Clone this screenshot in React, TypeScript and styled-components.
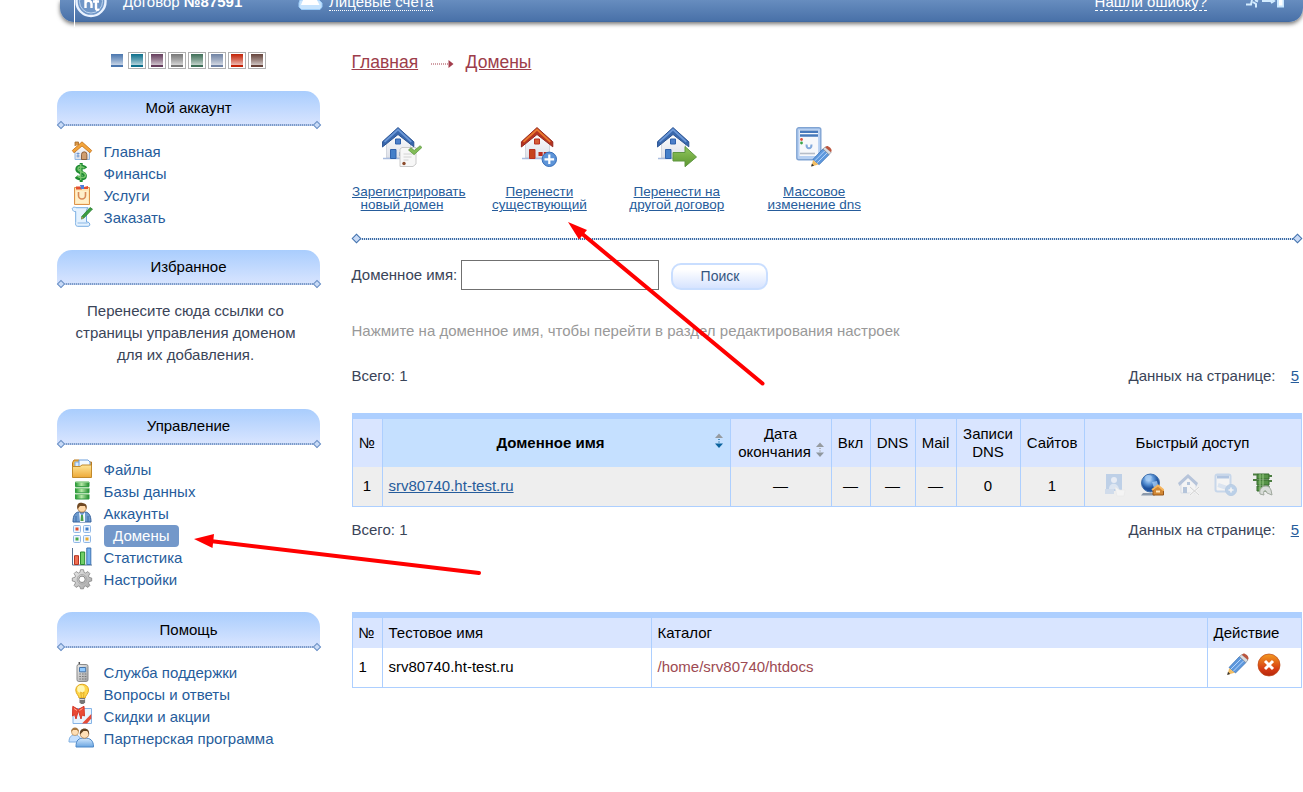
import React from "react";
import styled, { createGlobalStyle, css } from "styled-components";

const GlobalStyle = createGlobalStyle`
  * { box-sizing: border-box; }
  html, body { margin: 0; height: 792px; overflow: hidden; background: #fff; }
  body { font-family: "Liberation Sans", Arial, sans-serif; font-size: 15px; color: #3a4458; }
  a { color: #265c9b; }
`;

const Page = styled.div`
  position: relative;
  width: 1303px;
  height: 792px;
  overflow: hidden;
  display: flex;
  flex-direction: column;
`;

const Header = styled.header`
  flex: none;
  margin-left: 60px;
  width: 1243px;
  height: 22px;
  display: flex;
  color: #fff;
  background: linear-gradient(#678dbf, #4a72a9 92%, #3f679e);
  border-radius: 0 0 14px 14px;
  box-shadow: 0 2px 4px rgba(0, 0, 0, 0.55);
`;
const LogoBox = styled.div`
  width: 34px;
  height: 27px;
  margin-left: 14px;
  border-left: 1px solid #fff;
  svg { display: block; }
`;
const HeaderText = styled.div`
  height: 18px;
  width: 176px;
  padding-left: 15px;
  margin-top: -7px;
  line-height: 18px;
  white-space: nowrap;
`;
const HeaderLink = styled.span<{ $dashed?: boolean }>`
  height: 18px;
  margin-top: -7px;
  line-height: 18px;
  border-bottom: 1px ${(p) => (p.$dashed ? "dashed" : "dotted")} #fff;
  white-space: nowrap;
`;
const Spacer = styled.div`
  flex: 1;
`;
const ExitSlot = styled.div`
  width: 57px;
  margin: 0 0 0 39px;
  svg { display: block; }
`;

const Body = styled.div`
  display: flex;
  padding-left: 57px;
`;
const Sidebar = styled.aside`
  width: 263px;
  padding-top: 30px;
`;
const Main = styled.main`
  width: 951px;
  margin-left: 31px;
  padding-left: 1px;
`;

const Swatches = styled.div`
  display: flex;
  gap: 2px;
  height: 39px;
  padding-left: 51px;
`;
const Swatch = styled.div<{ $c: string; $active?: boolean }>`
  width: 18px;
  height: 17px;
  padding: 1px 2px;
  border: 1px solid ${(p) => (p.$active ? "#fff" : "#b0b0b0")};
  &::before {
    content: "";
    display: block;
    width: 12px;
    height: 13px;
    background: linear-gradient(${(p) => p.$c}, ${(p) => p.$c}aa 45%, ${(p) => p.$c}55 82%, ${(p) => p.$c} 84%);
  }
`;

const PanelTitle = styled.h2<{ $low?: boolean }>`
  margin: 0;
  height: 35px;
  font-size: 15px;
  font-weight: normal;
  line-height: ${(p) => (p.$low ? 35 : 33)}px;
  text-align: center;
  color: #000;
  background: linear-gradient(#a9cdfd, #d9e5ff);
  border-radius: 15px 15px 0 0;
`;
const Rule = styled.div<{ $main?: boolean; $lift?: boolean }>`
  display: flex;
  align-items: center;
  justify-content: space-between;
  height: 7px;
  margin-top: ${(p) => (p.$lift ? -5 : -4)}px;
  margin-bottom: ${(p) => (p.$lift ? 1 : 0)}px;
  padding: 0 ${(p) => (p.$main ? 1 : 0.5)}px;
  &::before, &::after {
    content: "";
    width: ${(p) => (p.$main ? 5 : 4)}px;
    height: ${(p) => (p.$main ? 5 : 4)}px;
    border: ${(p) => (p.$main ? "1.5px solid #4675ad" : "1px solid #6b90c4")};
    background: #c9dbf7;
    transform: rotate(45deg);
  }
`;
const RuleLine = styled.div<{ $main?: boolean }>`
  flex: 1;
  height: 2px;
  background: ${(p) =>
    p.$main
      ? "repeating-linear-gradient(90deg, #3d6ba5 0 1px, #d5e2f0 1px 2px)"
      : "repeating-linear-gradient(90deg, #7c9bca 0 1px, #b7caeb 1px 2px)"};
`;
const Menu = styled.nav<{ $gap: number }>`
  padding: 12px 0 0 15px;
  margin-bottom: ${(p) => p.$gap}px;
`;
const MenuItem = styled.div`
  display: flex;
  height: 22px;
  line-height: 22px;
  color: #265c9b;
  white-space: nowrap;
`;
const MenuIcon = styled.span`
  width: 31.6px;
  height: 22px;
  svg { display: block; overflow: visible; }
`;
const Label = styled.span<{ $active?: boolean }>`
  ${(p) =>
    p.$active &&
    css`
      color: #fff;
      background: #7398ca;
      border-radius: 4px;
      padding: 0 9.5px;
    `}
`;
const Hint = styled.p`
  margin: 13px 0 43px;
  height: 66px;
  line-height: 22px;
  padding: 0 10px 0 4px;
  text-align: center;
`;

const Crumbs = styled.div`
  display: flex;
  margin: 29px 0 0 -0.5px;
  height: 22px;
  line-height: 22px;
  font-size: 17.5px;
  a { color: #9d3d4a; }
  svg { margin: 8px 11.5px 0 12px; }
`;
const Actions = styled.div`
  display: flex;
  gap: 37.4px;
  height: 127px;
  padding-top: 54px;
`;
const Action = styled.div`
  width: 100px;
  text-align: center;
  font-size: 13.5px;
  line-height: 13px;
  svg { display: block; margin: 0 auto 18px; }
`;
const RuleBox = styled.div`
  padding-top: 39px;
`;
const SearchRow = styled.form`
  display: flex;
  height: 30px;
  margin: 18px 0 0 -0.5px;
  line-height: 30px;
`;
const SearchLabel = styled.label`
  width: 109.5px;
`;
const Field = styled.input`
  width: 198px;
  height: 30px;
  margin: 0 12px 0 0;
  border: 1px solid #707070;
  background: #fff;
`;
const Button = styled.button`
  width: 97px;
  height: 27px;
  margin-top: 3px;
  padding: 0 0 1px 1px;
  border: 2px solid #c9deff;
  border-radius: 10px;
  background: linear-gradient(#fff 20%, #d6e3ff);
  color: #345580;
  font: 14px "Liberation Sans", Arial, sans-serif;
`;
const Note = styled.p`
  margin: 30px 0 0 -0.5px;
  height: 22px;
  line-height: 22px;
  color: #999;
`;
const Totals = styled.div<{ $top: number; $bottom: number }>`
  display: flex;
  justify-content: space-between;
  margin: ${(p) => p.$top}px 3px ${(p) => p.$bottom}px -0.5px;
  height: 22px;
  line-height: 22px;
  a { margin-left: 11px; }
`;
const Grid = styled.div<{ $cols: string; $head: number }>`
  display: grid;
  grid-template-columns: ${(p) => p.$cols};
  grid-template-rows: ${(p) => p.$head}px 40px;
  width: 950px;
  border-top: 6px solid #adcfff;
  border-left: 1px solid #adcfff;
  color: #000;
`;
const Cell = styled.div<{ $bg?: string; $left?: boolean; $last?: boolean; $color?: string; $bold?: boolean }>`
  display: flex;
  align-items: center;
  justify-content: ${(p) => (p.$left ? "flex-start" : "center")};
  text-align: center;
  line-height: 18px;
  padding-left: ${(p) => (p.$left ? "5.5px" : "0")};
  padding-right: ${(p) => (p.$left ? "0" : "1px")};
  padding-bottom: ${(p) => (p.$last ? "2px" : "0")};
  border-right: 1px solid #adcfff;
  border-bottom: ${(p) => (p.$last ? "1px solid #adcfff" : "0")};
  background: ${(p) => p.$bg ?? "#fff"};
  color: ${(p) => p.$color ?? "inherit"};
  font-weight: ${(p) => (p.$bold ? "bold" : "normal")};
`;
const SortTitle = styled.span`
  flex: 1;
  padding-left: 4px;
`;
const DateTitle = styled.span`
  display: flex;
  flex-direction: column;
  align-items: center;
`;
const DateLine = styled.span`
  display: flex;
  height: 18px;
  margin-left: 2px;
`;
const SortSlot = styled.span<{ $low?: boolean }>`
  width: 10px;
  height: 16px;
  margin: ${(p) => (p.$low ? "-1px 0 0 4px" : "0 5px 4px 0")};
  svg { display: block; }
`;
const Quick = styled.div`
  display: flex;
  gap: 13px;
  padding: 0 8px 2px 0;
`;
const Tools = styled.div`
  display: flex;
  gap: 7px;
  padding: 0 1px 3px 0;
  svg { display: block; }
`;
const Arrows = styled.svg`
  position: absolute;
  left: 0;
  top: 0;
  pointer-events: none;
`;
const HiddenDefs = styled.svg`
  position: absolute;
`;

const Defs = () => (
  <HiddenDefs width="0" height="0">
    <defs>
      <linearGradient id="gold" x2="0" y2="1"><stop stopColor="#ffe596" /><stop offset="1" stopColor="#eda937" /></linearGradient>
      <linearGradient id="green" x2="1"><stop stopColor="#259a30" /><stop offset=".45" stopColor="#b4e8a6" /><stop offset="1" stopColor="#218b2c" /></linearGradient>
      <linearGradient id="leaf" x2="0" y2="1"><stop stopColor="#92c75d" /><stop offset="1" stopColor="#5c9630" /></linearGradient>
      <linearGradient id="sky" x2="0" y2="1"><stop stopColor="#d6ebff" /><stop offset="1" stopColor="#69a4e0" /></linearGradient>
      <linearGradient id="wall" x2="0" y2="1"><stop stopColor="#fff" /><stop offset="1" stopColor="#dde0e8" /></linearGradient>
      <linearGradient id="steel" x2="1" y2="1"><stop stopColor="#ededed" /><stop offset="1" stopColor="#a2a2a2" /></linearGradient>
      <linearGradient id="rust" x2="0" y2="1"><stop stopColor="#f39a21" /><stop offset=".7" stopColor="#d43a12" /><stop offset="1" stopColor="#b5270d" /></linearGradient>
      <radialGradient id="globe" cx=".4" cy=".3"><stop stopColor="#c4e1ff" /><stop offset=".6" stopColor="#558fd2" /><stop offset="1" stopColor="#1f529d" /></radialGradient>
    </defs>
  </HiddenDefs>
);

const glyphs: Record<string, React.ReactNode> = {
  home: (
    <>
      <path d="M3 9v9.5h14.500V9L10 3z" fill="url(#wall)" stroke="#90b8e5" />
      <path d="M3 5V1h3.500v3" fill="#d99542" stroke="#a56a28" strokeWidth=".8" />
      <path d="M.3 9.500 10 .8l9.700 8.700-1.700 2.300L10 5l-8 6.800z" fill="#f2a43b" stroke="#c36f16" strokeWidth=".8" />
      <path d="M9.5 18.5v-5a2.7 2.7 0 0 1 5.4 0v5z" fill="#cf9e70" stroke="#7c4c27" strokeWidth=".8" />
      <path d="M4.5 12.5h3M4.5 15h3M6 11.5v5" stroke="#7097cf" />
    </>
  ),
  money: (
    <>
      <path d="M13.500 5.500C12 3 5.200 2.800 5.200 6.300c0 4 7.800 2.400 7.800 6.400 0 3.800-6.700 3.400-8.700.8" fill="none" stroke="#1f8b32" strokeWidth="3.800" />
      <path d="M9.200 0v19" stroke="#1f8b32" strokeWidth="3" />
      <path d="M12.500 5.200c-2-2-6.500-2-6.500.8 0 3.500 7.500 2.200 7.500 6.200 0 3.300-6 3-8 .8M8.700 1v16" fill="none" stroke="#79c76d" strokeWidth="1.400" />
    </>
  ),
  bag: (
    <>
      <path d="M2.5 2.5h15v17h-15z" fill="#ffe6b5" stroke="#dc934a" />
      <path d="M4 1.5h4l2 3H4z" fill="#e44e2e" /><path d="M8 0h4v4H9z" fill="#4e7fdc" /><path d="m12 2 4-1v3h-4z" fill="#e44e2e" />
      <path d="M4 6h12v12H4z" fill="#fff0ca" />
      <path d="M6.5 7v3.5a3.5 3.5 0 0 0 7 0V7" fill="none" stroke="#d98b58" strokeWidth="1.6" />
    </>
  ),
  order: (
    <>
      <path d="M.5 2.500C-.500.500 2.500-.500 4 .7h12c-2 1.500-1.500 4-1.500 6V15c3-.8 5 4 1.500 4.300H5.700c-3 0-2-4.300-2-4.300V4.500C2 4.800 1 4 .5 2.500Z" fill="#e4f2ff" stroke="#78ade2" />
      <path d="M5.5 16h10" stroke="#8bb7e4" />
      <path d="m18 .5 2.500 1.600-8.700 9-2.300 1 .3-2.700z" fill="#3a9e42" stroke="#217428" strokeWidth=".7" />
      <path d="m9.5 12 .2-2.2 1.9 1.3z" fill="#d99b63" />
    </>
  ),
  folder: (
    <>
      <path d="M.5 3.5 2 1h5l1 2h11.500v7H.5z" fill="#f2b643" stroke="#b9781d" />
      <path d="M3 3h6v10H3z" fill="#d8ebff" stroke="#7fabe0" /><path d="M7 1h9l2 2v10H7z" fill="#f2f9ff" stroke="#6d9edb" />
      <path d="M.5 7.5H8l2-1.5h9.5v12.500H.5z" fill="url(#gold)" stroke="#c28a2b" />
    </>
  ),
  db: (
    <>
      {[0, 6.2, 12.4].map((y) => (
        <path key={y} d={`M3.500 ${y + 1}h13.500V${y + 5.6}h-13.500z`} fill="url(#green)" stroke="#2f9a40" />
      ))}
      <path d="M3.500 1h13.500M3.500 7h13.500M3.500 13h13.500" stroke="#bfe8b5" />
    </>
  ),
  user: (
    <>
      <path d="M1 19c0-7 2.5-10 6-10h6c3.5 0 6 3 6 10z" fill="#6e9bce" stroke="#35619c" />
      <path d="m7 9 3 4 3-4v10H8z" fill="#f3f8ff" /><path d="M9 12h2l.5 6h-3z" fill="#4c9f4a" />
      <path d="M4 13v6M16 13v6" stroke="#3e6ca8" />
      <circle cx="10" cy="5" r="4.2" fill="#ffd8a7" stroke="#99612b" strokeWidth=".7" />
      <path d="M5.5 6C4 .5 8-1 11 .3c4 .5 4 3 3.4 5.8L13 3 8 3z" fill="#704923" />
    </>
  ),
  domains: (
    <>
      {[[1, 0, "#e04e2e"], [11, 0, "#3e7cc6"], [1, 10, "#47a848"], [11, 10, "#e8a92b"]].map(([x, y, c]) => (
        <g key={`${x}${y}`}>
          <rect x={+x + 0.5} y={+y + 0.5} width="7" height="7" rx="1" fill="#edf5ff" stroke="#8fb7e6" />
          <rect x={+x + 2.5} y={+y + 2.5} width="3" height="3" fill={String(c)} />
        </g>
      ))}
    </>
  ),
  stats: (
    <>
      <path d="M.5 1v17H20" fill="none" stroke="#56718f" />
      <path d="M2.5 17.5V8.7h4v8.8z" fill="#ef7053" stroke="#b43322" />
      <path d="M8.5 17.5V5h4.2v12.5z" fill="#71cf67" stroke="#298a30" />
      <path d="M14.8 17.5V1h4v16.5z" fill="#77b2ed" stroke="#3f73b2" />
    </>
  ),
  gear: (
    <>
      <path d="M8.5.7h3l.6 2.7 1.4.6 2.4-1.4 2 2-1.4 2.4.6 1.4 2.6.6v3l-2.6.6-.6 1.4 1.4 2.4-2 2-2.4-1.4-1.4.6-.6 2.2h-3l-.6-2.2-1.4-.6-2.4 1.4-2-2L3.5 14l-.6-1.4L.3 12V9l2.6-.6L3.5 7 2.1 4.6l2-2L6.5 4l1.4-.6z" fill="url(#steel)" stroke="#858585" strokeWidth=".8" />
      <circle cx="10" cy="10.3" r="4.8" fill="none" stroke="#aaa" />
      <circle cx="10" cy="10.3" r="3.2" fill="#fff" stroke="#888" />
    </>
  ),
  phone: (
    <>
      <path d="M7.3 0v4" stroke="#555" strokeWidth="1.5" />
      <rect x="5" y="2.5" width="11" height="17" rx="1.8" fill="url(#steel)" stroke="#8b8b8b" />
      <path d="M7.5 5.5h6.200v4.3H7.5z" fill="#8fc9ff" stroke="#4676ab" />
      <path d="M7.3 12h7M7.3 14.5h7M7.3 17h7" stroke="#777" strokeDasharray="1.6 1.1" />
    </>
  ),
  bulb: (
    <>
      <path d="M7 14c0-2.500-3.200-4-3.200-8C3.800-1.700 16.500-1.700 16.500 6c0 4-3.300 5.500-3.300 8z" fill="#ffd84d" stroke="#dfa51c" />
      <circle cx="9" cy="5" r="3.8" fill="#fff7b3" /><path d="m9.500 14-.8-6 1.500 1.400L12 8l-.5 6" fill="none" stroke="#e5ae27" />
      <path d="M7.5 14h5.6v4.2L11.5 20H9l-1.500-1.800z" fill="#777" /><path d="M7.5 15.5h5" stroke="#ddd" />
    </>
  ),
  gift: (
    <>
      <path d="M1 2.500h18.500v15H1z" fill="#e8f4ff" stroke="#86b4e6" />
      <path d="M10 17.500 19.300 8v4.500L15 17.500z" fill="#e54b37" />
      <path d="M6.3 3.500.8.3.5 10l2-1.500L4 13l2.300-8.300L9 13l1-4 2.500 1-.5-9.700z" fill="#ea4934" stroke="#d63a2b" />
      <path d="m2 2.500 3 2M10.500 2.500l-3 2" stroke="#ffa793" />
    </>
  ),
  partners: (
    <>
      <path d="M-3 14c0-5 2-7 6-7s6 3 6 7z" fill="#c5e0ff" stroke="#7eafe1" />
      <circle cx="3" cy="4" r="3.5" fill="#ffdfb5" stroke="#ad7a42" strokeWidth=".6" /><path d="M-1 4C-1-2 7-2 7 4L5 2H1z" fill="#a77841" />
      <path d="M4 19c0-7 2.5-9 8.5-9s9 2.5 9 9z" fill="url(#sky)" stroke="#4c88c8" />
      <circle cx="12.5" cy="6" r="4.3" fill="#ffe0b6" stroke="#986535" strokeWidth=".7" />
      <path d="M8 6.5C6.5-1.5 18.5-1.5 17 6.5L15.5 3h-4z" fill="#614322" />
    </>
  ),
};

const Glyph = ({ name }: { name: string }) => (
  <svg width="20" height="20" viewBox="0 0 20 20">{glyphs[name]}</svg>
);

const House = ({ red }: { red?: boolean }) => {
  const c = red ? "#b92f20" : "#2f62ac";
  return (
    <>
      <path d="M4.5 17 16 5.5 28.5 17v14H4.5z" fill="url(#wall)" stroke="#c3c8d4" strokeWidth=".7" />
      <path d="M1 31.5h28" stroke="#a9bcdf" strokeWidth="1.5" />
      <path d="M8.5 22.5h5.5v9H8.5z" fill={red ? "#c6431b" : "#447fc9"} stroke={c} />
      <path d="M17.5 25h4.2v4h-4.2zM22.8 25h4v4h-4z" fill={c} />
      <path d="M13.5 12h5v5h-5z" fill={red ? "#d35d35" : "#4c7fc9"} stroke={c} />
      <path d="M.4 14.8 16 .6l15.8 14.2v5L16 7.500.4 20z" fill={red ? "#b53420" : "#3867ac"} stroke={red ? "#942920" : "#2b5392"} strokeWidth="1" strokeLinejoin="round" />
      <path d="m2.500 14.800 13.500-12.300 13.300 12.300" fill="none" stroke={red ? "#e97a2e" : "#6b97d6"} strokeWidth="1.800" />
    </>
  );
};

const Pencil = () => (
  <>
    <path d="m3 14.500 10.500-11 6.500 6L9.500 20z" fill="#5e98dc" stroke="#326bb2" strokeWidth=".7" />
    <path d="m5 16 10.500-10.500M7.500 18l10.500-10.500" stroke="#b7d7ff" strokeWidth="1" />
    <path d="m1.500 21.800 1.700-6.600 5.500 4.600z" fill="#f3bd62" /><path d="m1.200 22 .8-3.200 2.200 2.200z" fill="#333" />
    <path d="m13.500 3.500 2.500-2 6 5.500-2.200 2.500z" fill="#d9dde1" stroke="#868b93" strokeWidth=".7" />
    <path d="m15.700 1.700 1.800-1.200c2.200 0 5 2.500 5 4.900L22 7z" fill="#bb563e" />
  </>
);

const actionArt = [
  <>
    <House />
    <path d="M20 20.5h14V37l-3 2.5H18V22z" fill="#f7f7f7" stroke="#cacaca" /><path d="M21.5 27h9M21.5 30h8M21.5 33h5" stroke="#d2d2d2" />
    <circle cx="22" cy="36.5" r="1.7" fill="#8b4b2c" />
    <path d="m26.5 23 2.5-2.3 3.2 2.8 6-4.8 1.7 1.8-7.8 7.2z" fill="#83bd58" stroke="#55903a" strokeWidth=".7" />
  </>,
  <>
    <g transform="translate(2)"><House red /></g>
    <circle cx="30.3" cy="32.3" r="7.2" fill="#5d94d8" stroke="#376eb8" /><path d="M30.3 27.5v9.6M25.5 32.3h9.6" stroke="#fff" strokeWidth="2.2" />
  </>,
  <>
    <House />
    <path d="M16 25.5h12v-6L39.5 30 28 39.7V34H16z" fill="url(#leaf)" stroke="#5e9641" />
  </>,
  <>
    <rect x="2.8" y=".8" width="24" height="32" rx="2" fill="#b7d0f2" stroke="#80a4d3" strokeWidth="1.4" />
    <path d="M5.5 3h18.6v26H5.5z" fill="#f7f8fb" /><path d="M6 4.800h18M6 8.500h18" stroke="#4779bb" strokeWidth="2.400" />
    <path d="M6 26.5h15" stroke="#b6bdc8" strokeWidth="1.6" /><circle cx="7.5" cy="12.5" r="1.4" fill="#dc4e39" /><circle cx="7.5" cy="16" r="1.4" fill="#3ba348" />
    <path d="M12.500 17.500c0 5 5 5 5 0" fill="none" stroke="#83a9dc" strokeWidth="2" />
    <g transform="translate(16 18.5) scale(.96)"><Pencil /></g>
  </>,
];

const quickArt = [
  <g opacity=".38">
    <path d="M3 1h16v17H3z" fill="#72a2de" /><circle cx="11" cy="7" r="3" fill="#dfeaff" /><path d="M6 16c0-7 9-7 10 0z" fill="#c1d8f6" />
    <path d="M2 16h9v5H2z" fill="#a3c1e8" /><path d="m12 14 5 3 5 0-1 6h-7z" fill="#fff" stroke="#ddd" strokeWidth=".6" />
  </g>,
  <>
    <circle cx="10.5" cy="10" r="9" fill="url(#globe)" stroke="#3e6fad" /><path d="M5 4c2-3 6-2 7 0l-2 3-4 1zM12 9l5-1 1 4-4 3z" fill="#a3c9f3" opacity=".8" />
    <path d="M3 20h12v2.5H1z" fill="#8b99aa" /><path d="M13 21v-4l5-4 5.5 4v5H13z" fill="#d28835" stroke="#985719" />
    <path d="m12 17 6-4.5 6 5" fill="none" stroke="#f7b65e" strokeWidth="2" /><path d="M16 18.5h4" stroke="#ffe6be" strokeWidth="2" />
  </>,
  <g opacity=".4">
    <path d="M4 10v10h15V9l-8-7z" fill="#fff" stroke="#bcc7db" /><path d="m1 10 10-9 10 9-1.500 3L11 5 2.500 13z" fill="#6386bd" />
    <path d="M6 14h4v6H6zM10 9h3v3h-3z" fill="#5f86bd" /><path d="m13 14 9 8M22 14l-9 8" stroke="#fff" strokeWidth="3" /><path d="m13 14 9 8M22 14l-9 8" stroke="#aaa" />
  </g>,
  <g opacity=".4">
    <rect x="1.500" y="1.500" width="15" height="17" rx="2" fill="#fff" stroke="#8fb5e6" strokeWidth="2" /><path d="M3 4h12" stroke="#5889cf" strokeWidth="3" />
    <path d="m4 12 9 3" stroke="#c0d7f4" strokeWidth="4" /><circle cx="17" cy="17" r="5.500" fill="#71a5e0" stroke="#6a9ad4" /><path d="M14.500 17h5M17 14.500v5" stroke="#fff" strokeWidth="1.600" />
  </g>,
  <>
    <path d="M6 1h12v5H6zM6 7h12v5H6zM6 13h12v5H6z" fill="#569347" stroke="#356a2c" /><path d="M9 1v17M12 1v17" stroke="#9aca87" />
    <path d="M2 1.500h4M2 7h4M18 3h3M18 8h3" stroke="#4c7e41" strokeWidth="2" />
    <path d="M9 21c-1-5 2-8 6-8 3 0 4 2 5 4l1 5-5-2-1-2c-2-1-3 1-2 4z" fill="#d9ddd9" stroke="#a0a89e" />
  </>,
];

const Sort = ({ active }: { active?: boolean }) => (
  <svg width="10" height="16" viewBox="0 0 10 16">
    <path d="M1 5 5 .5 9 5z" fill="#969ba0" />
    <path d="M4 6.5h2M4 9h2" stroke={active ? "#4c91bd" : "#aeb3b8"} />
    <path d="M1 10.5h8L5 15z" fill={active ? "#0b639e" : "#8f979e"} />
  </svg>
);

const Panel = ({ title, lift, low }: { title: string; lift?: boolean; low?: boolean }) => (
  <>
    <PanelTitle $low={low}>{title}</PanelTitle>
    <Rule $lift={lift}><RuleLine /></Rule>
  </>
);

const List = ({ items, gap }: { items: [string, string][]; gap: number }) => (
  <Menu $gap={gap}>
    {items.map(([icon, text]) => (
      <MenuItem key={text}>
        <MenuIcon><Glyph name={icon} /></MenuIcon>
        <Label $active={text === "Домены"}>{text}</Label>
      </MenuItem>
    ))}
  </Menu>
);

const colors = ["#4a76ae", "#0c6f8b", "#653d5c", "#777777", "#3f6f58", "#6f82a3", "#c32206", "#65433b"];
const head = "#d9e5ff";
const row = "#eeeeee";

export default function App() {
  return (
    <>
      <GlobalStyle />
      <Defs />
      <Page>
        <Header>
          <LogoBox>
            <svg width="34" height="22" viewBox="0 0 34 22">
              <circle cx="16" cy="1.500" r="14.500" fill="#7097c8" stroke="#e9f2ff" strokeWidth="2.400" />
              <circle cx="16" cy="1.500" r="11.500" fill="none" stroke="#bdd4ee" />
              <path d="M10.500 0v8M10.500 3c1-3 6-3 6 1v4M21 0v8c0 2 1.500 2.500 3 1M18 1.500h6" fill="none" stroke="#fff" strokeWidth="2.400" />
            </svg>
          </LogoBox>
          <HeaderText>Договор <b>№87591</b></HeaderText>
          <svg width="45" height="12" viewBox="0 0 45 12">
            <path d="M16 0h19l3 3v4l-2 2.500H17.500L15 7V3z" fill="#c6e3fd" stroke="#9cccf8" />
            <path d="M19 0h14l2.500 5H17z" fill="#fff" />
          </svg>
          <HeaderLink>Лицевые счета</HeaderLink>
          <Spacer />
          <HeaderLink $dashed>Нашли ошибку?</HeaderLink>
          <ExitSlot>
            <svg width="42" height="9" viewBox="0 0 42 9">
              <path d="M6 0 5 4.500H0M7 2l3 2v3.500M9 0l3 1.500M16 1h10M25-1l3 2-3 2" fill="none" stroke="#d3ecff" strokeWidth="2" />
              <path d="M31 0h7v7.500h-7z" fill="#c9e7ff" /><path d="M33 0h3.500v5.500H33z" fill="#fff" />
            </svg>
          </ExitSlot>
        </Header>
        <Body>
          <Sidebar>
            <Swatches>{colors.map((c, i) => <Swatch key={c} $c={c} $active={i === 0} />)}</Swatches>
            <Panel title="Мой аккаунт" lift />
            <List gap={21} items={[["home", "Главная"], ["money", "Финансы"], ["bag", "Услуги"], ["order", "Заказать"]]} />
            <Panel title="Избранное" lift />
            <Hint>Перенесите сюда ссылки со<br />страницы управления доменом<br />для их добавления.</Hint>
            <Panel title="Управление" />
            <List gap={21} items={[["folder", "Файлы"], ["db", "Базы данных"], ["user", "Аккаунты"], ["domains", "Домены"], ["stats", "Статистика"], ["gear", "Настройки"]]} />
            <Panel title="Помощь" low />
            <List gap={0} items={[["phone", "Служба поддержки"], ["bulb", "Вопросы и ответы"], ["gift", "Скидки и акции"], ["partners", "Партнерская программа"]]} />
          </Sidebar>
          <Main>
            <Crumbs>
              <a href="#home">Главная</a>
              <svg width="24" height="10" viewBox="0 0 24 10">
                <path d="M1 5h18" stroke="#a33e4d" strokeDasharray="1 1" strokeWidth="1.2" /><path d="m18.5 1 5 4-5 4z" fill="#a33e4d" />
              </svg>
              <a href="#domains">Домены</a>
            </Crumbs>
            <Actions>
              {["Зарегистрировать новый домен", "Перенести существующий", "Перенести на другой договор", "Массовое изменение dns"].map((t, i) => (
                <Action key={t}>
                  <svg width="40" height="40" viewBox="0 0 40 40">{actionArt[i]}</svg>
                  <a href="#action">{t}</a>
                </Action>
              ))}
            </Actions>
            <RuleBox>
              <Rule $main><RuleLine $main /></Rule>
            </RuleBox>
            <SearchRow>
              <SearchLabel>Доменное имя:</SearchLabel>
              <Field />
              <Button type="button">Поиск</Button>
            </SearchRow>
            <Note>Нажмите на доменное имя, чтобы перейти в раздел редактирования настроек</Note>
            <Totals $top={23} $bottom={26}>
              <span>Всего: 1</span>
              <span>Данных на странице: <a href="#n">5</a></span>
            </Totals>
            <Grid $cols="30px 348px 101px 39px 45px 41px 64px 64px 217px" $head={48}>
              <Cell $bg={head}>№</Cell>
              <Cell $bg="#c5e0ff" $bold><SortTitle>Доменное имя</SortTitle><SortSlot><Sort active /></SortSlot></Cell>
              <Cell $bg={head}>
                <DateTitle>
                  <span>Дата</span>
                  <DateLine>окончания<SortSlot $low><Sort /></SortSlot></DateLine>
                </DateTitle>
              </Cell>
              <Cell $bg={head}>Вкл</Cell>
              <Cell $bg={head}>DNS</Cell>
              <Cell $bg={head}>Mail</Cell>
              <Cell $bg={head}>Записи<br />DNS</Cell>
              <Cell $bg={head}>Сайтов</Cell>
              <Cell $bg={head}>Быстрый доступ</Cell>
              <Cell $bg={row} $last>1</Cell>
              <Cell $bg={row} $last $left><a href="#d">srv80740.ht-test.ru</a></Cell>
              <Cell $bg={row} $last>—</Cell>
              <Cell $bg={row} $last>—</Cell>
              <Cell $bg={row} $last>—</Cell>
              <Cell $bg={row} $last>—</Cell>
              <Cell $bg={row} $last>0</Cell>
              <Cell $bg={row} $last>1</Cell>
              <Cell $bg={row} $last>
                <Quick>{quickArt.map((art, i) => <svg key={i} width="24" height="24" viewBox="0 0 24 24">{art}</svg>)}</Quick>
              </Cell>
            </Grid>
            <Totals $top={12} $bottom={71}>
              <span>Всего: 1</span>
              <span>Данных на странице: <a href="#n">5</a></span>
            </Totals>
            <Grid $cols="30px 269px 556px 94px" $head={30}>
              <Cell $bg={head} $left>№</Cell>
              <Cell $bg={head} $left>Тестовое имя</Cell>
              <Cell $bg={head} $left>Каталог</Cell>
              <Cell $bg={head} $left>Действие</Cell>
              <Cell $last $left>1</Cell>
              <Cell $last $left>srv80740.ht-test.ru</Cell>
              <Cell $last $left $color="#9d4a52">/home/srv80740/htdocs</Cell>
              <Cell $last>
                <Tools>
                  <svg width="24" height="24" viewBox="0 0 24 24"><Pencil /></svg>
                  <svg width="24" height="24" viewBox="0 0 24 24">
                    <circle cx="12" cy="12" r="11" fill="url(#rust)" stroke="#bd4512" strokeWidth=".7" />
                    <path d="m8 8 8 8M16 8l-8 8" stroke="#fff" strokeWidth="3" />
                  </svg>
                </Tools>
              </Cell>
            </Grid>
          </Main>
        </Body>
        <Arrows width="1303" height="792" viewBox="0 0 1303 792">
          <g stroke="#f00" strokeWidth="4" strokeLinecap="round">
            <path d="m580 232 182.500 151.500" />
            <path d="m208 540.700 271 32.300" />
          </g>
          <path d="m568 222 19 8-8 9.500zM194 539l20-5-1.500 14z" fill="#f00" />
        </Arrows>
      </Page>
    </>
  );
}
